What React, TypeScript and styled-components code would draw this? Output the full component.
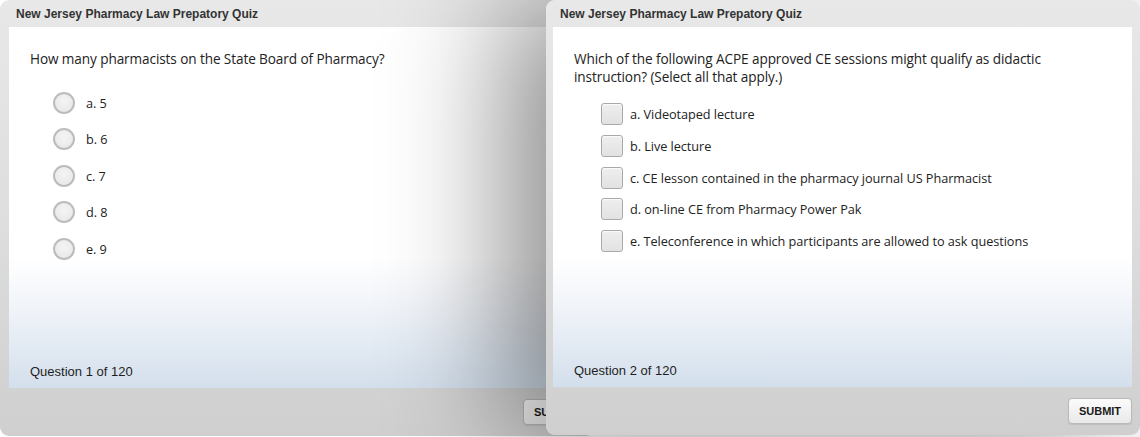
import React from "react";
import { createGlobalStyle, styled } from "styled-components";

const radioOptions = ["a. 5", "b. 6", "c. 7", "d. 8", "e. 9"];
const checkOptions = [
  "a. Videotaped lecture",
  "b. Live lecture",
  "c. CE lesson contained in the pharmacy journal US Pharmacist",
  "d. on-line CE from Pharmacy Power Pak",
  "e. Teleconference in which participants are allowed to ask questions",
];

const QuizWindow = ({
  $left,
  $width,
  $height,
  $front,
  current,
  children,
}: {
  $left: number;
  $width: number;
  $height: number;
  $front?: boolean;
  current: number;
  children: React.ReactNode;
}) => (
  <Window $left={$left} $width={$width} $height={$height} $front={$front}>
    <TitleBar>New Jersey Pharmacy Law Prepatory Quiz</TitleBar>
    <Content>
      <QuestionArea>{children}</QuestionArea>
      <Counter>Question {current} of 120</Counter>
    </Content>
    <BottomBar>
      <SubmitButton>SUBMIT</SubmitButton>
    </BottomBar>
  </Window>
);

const App = (): React.ReactNode => {
  return (
    <>
      <GlobalStyle />
      <Desktop>
        <QuizWindow $left={0} $width={595} $height={436} current={1}>
          <Question>How many pharmacists on the State Board of Pharmacy?</Question>
          <RadioList>
            {radioOptions.map(option => (
              <OptionRow key={option}>
                <Radio />
                <OptionLabel>{option}</OptionLabel>
              </OptionRow>
            ))}
          </RadioList>
        </QuizWindow>
        <QuizWindow $left={546} $width={594} $height={435} $front current={2}>
          <Question>
            Which of the following ACPE approved CE sessions might qualify as didactic
            <br />
            instruction? (Select all that apply.)
          </Question>
          <CheckList>
            {checkOptions.map(option => (
              <OptionRow key={option}>
                <Checkbox />
                <OptionLabel>{option}</OptionLabel>
              </OptionRow>
            ))}
          </CheckList>
        </QuizWindow>
      </Desktop>
    </>
  );
};

const GlobalStyle = createGlobalStyle`
  html, body {
    margin: 0;
    padding: 0;
    background: #ffffff;
  }
  * {
    box-sizing: border-box;
  }
`;
const Desktop = styled.div`
  position: relative;
  width: 1140px;
  height: 437px;
  overflow: hidden;
`;
const Window = styled.div<{ $left: number; $width: number; $height: number; $front?: boolean }>`
  position: absolute;
  top: 0;
  left: ${({ $left }) => $left}px;
  width: ${({ $width }) => $width}px;
  height: ${({ $height }) => $height}px;
  display: flex;
  flex-direction: column;
  padding: 0 8px 0 ${({ $front }) => ($front ? 7 : 9)}px;
  border-radius: 9px;
  background: linear-gradient(to bottom, #e8e8e8 0%, #dedede 50%, #cfcfcf 100%);
  z-index: ${({ $front }) => ($front ? 2 : 1)};
  box-shadow: ${({ $front }) => ($front ? "-40px 0 120px 0 rgba(0, 0, 0, 0.45)" : "none")};
`;
const TitleBar = styled.div`
  display: flex;
  align-items: center;
  height: 27px;
  padding: 1px 0 0 7px;
  font-family: "Liberation Sans", Arial, sans-serif;
  font-size: 12px;
  font-weight: bold;
  color: #333333;
`;
const Content = styled.div`
  flex: 1;
  display: flex;
  flex-direction: column;
  background: linear-gradient(to bottom, #ffffff 0%, #ffffff 64%, #eef2f8 80%, #d3dfec 100%);
`;
const QuestionArea = styled.div`
  flex: 1;
  padding: 23px 0 0 21px;
`;
const Question = styled.div`
  font-family: "Open Sans", "Noto Sans", sans-serif;
  font-size: 13.6px;
  line-height: 18px;
  color: #222222;
  letter-spacing: -0.1px;
`;
const RadioList = styled.div`
  display: flex;
  flex-direction: column;
  gap: 14.4px;
  margin: 24px 0 0 23px;
`;
const CheckList = styled.div`
  display: flex;
  flex-direction: column;
  gap: 9.75px;
  margin: 17px 0 0 27px;
`;
const OptionRow = styled.div`
  display: flex;
  align-items: center;
  height: 22px;
`;
const Radio = styled.span`
  width: 22px;
  height: 22px;
  border-radius: 50%;
  border: 2px solid #bcbcbc;
  background: radial-gradient(circle at 50% 40%, #f4f4f4 0%, #e6e6e6 100%);
  margin-right: 11px;
`;
const Checkbox = styled.span`
  width: 22px;
  height: 22px;
  border-radius: 3px;
  border: 1px solid #a9a9a9;
  background: linear-gradient(to bottom, #eeeeee 0%, #e2e2e2 100%);
  box-shadow: inset 0 1px 1px rgba(255, 255, 255, 0.8);
  margin-right: 7px;
`;
const OptionLabel = styled.span`
  font-family: "Open Sans", "Noto Sans", sans-serif;
  font-size: 12.7px;
  color: #222222;
  letter-spacing: -0.05px;
`;
const Counter = styled.div`
  padding: 0 0 8px 21px;
  font-family: "Liberation Sans", Arial, sans-serif;
  font-size: 13px;
  line-height: 16px;
  color: #1e1e1e;
`;
const BottomBar = styled.div`
  display: flex;
  justify-content: flex-end;
  align-items: center;
  height: 48px;
`;
const SubmitButton = styled.button`
  width: 64px;
  height: 26px;
  border: 1px solid #b9b9b9;
  border-radius: 4px;
  background: linear-gradient(to bottom, #fbfbfb 0%, #e9e9e9 100%);
  box-shadow: 0 1px 1px rgba(0, 0, 0, 0.08);
  font-family: "Liberation Sans", Arial, sans-serif;
  font-size: 11px;
  font-weight: bold;
  color: #1a1a1a;
  padding: 0;
`;

export default App;
